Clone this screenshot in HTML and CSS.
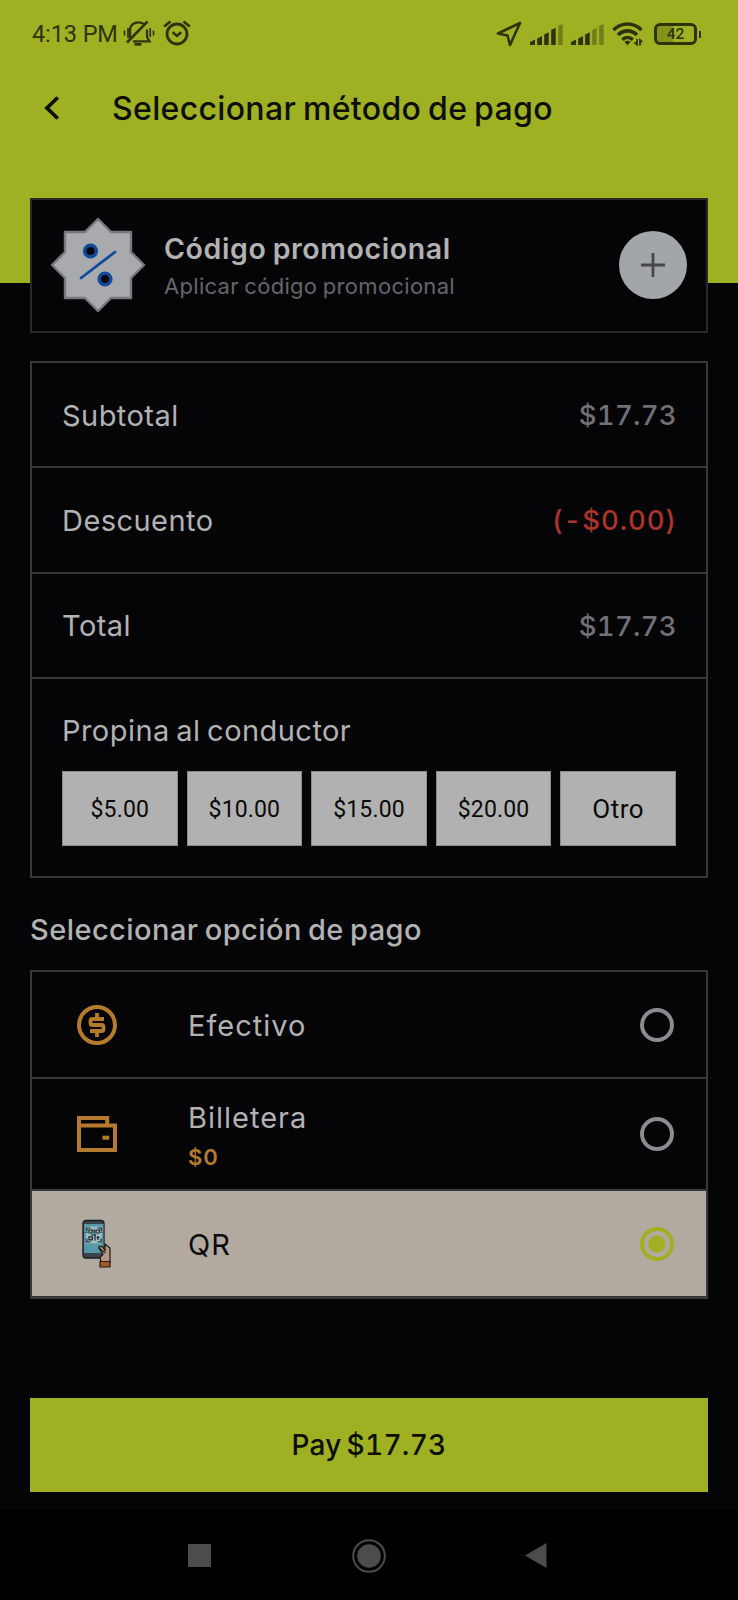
FILE: index.html
```html
<!DOCTYPE html>
<html lang="es">
<head>
<meta charset="utf-8">
<title>Seleccionar método de pago</title>
<link rel="stylesheet" href="styles.css">
</head>
<body>
<div class="screen">
  <header class="header">
    <div class="status">
      <span class="clock">4:13 PM</span>
      <svg class="bell" width="32" height="28" viewBox="0 0 32 28" fill="none" stroke="#2d330c" stroke-width="2.300">
        <path d="M7 18.500v-8C7 5 11 2.300 15.500 2.300c2.700 0 4.700.8 6.200 2.200M24 9.500v7.500l2.500 4.300H10"/>
        <path d="M4 22.500 24.500 1.500" stroke-width="2.600"/>
        <path d="M11.500 24.300h7" stroke-width="2.600"/>
        <path d="M1.500 10.500v5M5 8v10M27.200 8v9M30.500 10.500v5" stroke-width="1.700"/>
      </svg>
      <svg class="alarm" width="28" height="26" viewBox="0 0 28 26" fill="none" stroke="#2d330c" stroke-width="2.800">
        <circle cx="14" cy="14" r="10"/><path d="M9.500 12.300 14 15.800l4.300-3.500" stroke-width="2.500"/>
        <path d="M1.200 6.500 7.500 1.500M20.500 1.500l6.300 5" stroke-width="2.800"/>
      </svg>
      <div class="status-right">
        <svg class="loc" width="26" height="26" viewBox="0 0 26 26" fill="none" stroke="#2d330c" stroke-width="2.600" stroke-linejoin="round"><path d="M24 2 2 12.500l9.500 2L14 24z"/></svg>
        <svg class="sig" width="33" height="21" viewBox="0 0 33 21" fill="#2d330c"><path d="M0 18l5-2.500V21H0zM7.200 14.500 12 12v9H7.200zM14.200 10.500l4.500-2.300V21h-4.500zM21.200 6l4.500-2.300V21h-4.500z"/><path d="M28.200 1.800 32.700 0v21h-4.500z" opacity=".4"/></svg>
        <svg class="sig" width="33" height="21" viewBox="0 0 33 21" fill="#2d330c"><path d="M0 18l5-2.500V21H0zM7.200 14.500 12 12v9H7.200zM14.200 10.500l4.500-2.300V21h-4.500z"/><path d="M21.200 6l4.500-2.300V21h-4.500zM28.200 1.800 32.700 0v21h-4.500z" opacity=".4"/></svg>
        <svg class="wifi" width="32" height="24" viewBox="0 0 32 24" fill="none" stroke="#2d330c" stroke-width="3.600">
          <path d="M1.500 8c8-8 20-8 28 0M6 13c5.500-5.500 13.500-5.500 19 0M10.300 17.800c3-3 7.400-3 10.400 0"/><path d="M12.500 20c1.500-1.600 4.500-1.600 6 0l-3 3.200z" fill="#2d330c" stroke="none"/>
          <path d="M25 17v5.500l-2.500-2M28 23.500V18l2.300 2" stroke-width="1.800"/>
        </svg>
        <div class="battery">42</div><span class="battery-tip"></span>
      </div>
    </div>
    <div class="titlebar">
      <svg class="back" width="16" height="24" viewBox="0 0 16 24" fill="none" stroke="#0d0f04" stroke-width="3.800"><path d="M13.700 1.500 3 12l10.700 10.500"/></svg>
      <h1>Seleccionar método de pago</h1>
    </div>
  </header>

  <section class="promo">
    <svg class="badge" width="96" height="96" viewBox="0 0 96 96">
      <path d="M48 2 61 15H81V35L94 48 81 61V81H61L48 94 35 81H15V61L2 48 15 35V15H35Z" fill="#a9aaad" stroke="#77797e" stroke-width="2.400" stroke-linejoin="round"/>
      <path d="M31 61 65 35" stroke="#104a9c" stroke-width="2.800" stroke-linecap="round"/>
      <circle cx="40.500" cy="34" r="5.800" fill="#050508" stroke="#104a9c" stroke-width="3.600"/>
      <circle cx="55" cy="62" r="5.800" fill="#050508" stroke="#104a9c" stroke-width="3.600"/>
    </svg>
    <div class="promo-text"><div class="promo-title">Código promocional</div><div class="promo-sub">Aplicar código promocional</div></div>
    <button class="add" aria-label="+"><svg width="24" height="24" viewBox="0 0 24 24" stroke="#47474b" stroke-width="2.800"><path d="M12 0v24M0 12h24"/></svg></button>
  </section>

  <section class="summary">
    <div class="row"><span>Subtotal</span><span class="amount">$17.73</span></div>
    <div class="row"><span>Descuento</span><span class="amount discount">(-$0.00)</span></div>
    <div class="row"><span>Total</span><span class="amount">$17.73</span></div>
    <div class="tips">
      <div class="tips-label">Propina al conductor</div>
      <div class="tip-list">
        <button class="tip">$5.00</button><button class="tip">$10.00</button><button class="tip">$15.00</button><button class="tip">$20.00</button><button class="tip other">Otro</button>
      </div>
    </div>
  </section>

  <h2>Seleccionar opción de pago</h2>
  <section class="options">
    <div class="option cash">
      <svg class="icon" width="40" height="40" viewBox="0 0 40 40" fill="none" stroke="#b47b2c" stroke-width="4"><circle cx="20" cy="20" r="18"/><path d="M27 14H15.500a2 2 0 0 0-2 2v2a2 2 0 0 0 2 2h9a2 2 0 0 1 2 2v2a2 2 0 0 1-2 2H13M20 8v5M20 26.500V32" stroke-width="3.800"/></svg>
      <div class="name">Efectivo</div><span class="radio"></span>
    </div>
    <div class="option wallet">
      <svg class="icon" width="40" height="36" viewBox="0 0 40 36" fill="none" stroke="#b47b2c" stroke-width="4"><path d="M30.200 9V2H2v32h36V9.500H2"/><path d="M25.500 21.700h6.700" stroke-width="4"/></svg>
      <div class="name"><div>Billetera</div><div class="balance">$0</div></div><span class="radio"></span>
    </div>
    <div class="option qr">
      <svg class="icon" width="40" height="50" viewBox="0 0 40 50">
        <rect x="6" y="1.500" width="21" height="37.500" rx="3" fill="#3b464c" stroke="#181c20" stroke-width="1.300"/>
        <path d="M7 5h19.500v29H7z" fill="#5698a9"/><path d="M9 7.500h16v17H9z" fill="#a0bdc2"/>
        <path d="M13.500 9h-3.700v3.500M20.500 9h3.700v3.500M9.800 19.500V23h3.700M24.200 19.500V23h-3.700" fill="none" stroke="#1a252b" stroke-width="1.200"/>
        <path d="M12 11h3.300v3H12zM19 11h3.300v3H19zM12 17.800h3.300v3H12zM17.200 10.500v4M14 16h5M18 15v6.500M21 17v4M19.500 18.500h3" fill="none" stroke="#1a252b" stroke-width="1.200"/>
        <path d="M7 13.500h19" stroke="#376d7e" stroke-width="1"/>
        <path d="M22 29c0-2 2-2 4-.5l2 3v-6.500l5 4V43H24l-1-4.500 3-3z" fill="#b39883" stroke="#1e1b1a" stroke-width="1.200"/>
        <path d="M21.500 28.500 28 34" stroke="#222" stroke-width="1.300"/><path d="M23 42.500h10V48H23z" fill="#a65a22" stroke="#261b15" stroke-width="1.200"/>
      </svg>
      <div class="name">QR</div><span class="radio on"></span>
    </div>
  </section>
  <button class="pay">Pay $17.73</button>
  <nav class="nav">
    <span class="square"></span>
    <svg class="home" width="36" height="36" viewBox="0 0 36 36"><circle cx="18" cy="18" r="15.800" fill="none" stroke="#4c4c4c" stroke-width="2"/><circle cx="18" cy="18" r="11.800" fill="#4c4c4c"/></svg>
    <svg class="prev" width="22" height="25" viewBox="0 0 22 25"><path d="M0 12.500 21.500 0v25z" fill="#4c4c4c"/></svg>
  </nav>
</div>
</body>
</html>
```
FILE: styles.css
```css
* { box-sizing: border-box; }
body { margin: 0; background: #050508; }
button { border: 0; padding: 0; margin: 0; border-radius: 0; font: inherit; }
svg { display: block; flex: none; }
h1, h2 { margin: 0; font-weight: 500; }
.screen { width: 738px; height: 1600px; overflow: hidden; display: flex; flex-direction: column; background: #050508; color: #b2b2b2; font-family: Inter, "Liberation Sans", sans-serif; white-space: nowrap; }
.header { flex: none; height: 283px; background: #9fb122; }
.status { height: 68px; padding: 0 37px 0 32px; display: flex; align-items: center; color: #2d330c; }
.clock { font: 400 23.5px/28px Roboto, sans-serif; width: 91px; letter-spacing: -.1px; }
.alarm { margin: -2px 0 0 8px; }
.status-right { margin-left: auto; display: flex; align-items: center; }
.loc { margin-right: 8px; }
.sig { margin-right: 8px; }
.wifi { margin-right: 10px; }
.battery { width: 43px; height: 22px; border: 3px solid #2d330c; border-radius: 6px; font: 500 15.5px/17px Roboto, sans-serif; text-align: center; background: linear-gradient(90deg, #84931a 42%, transparent 42%); }
.battery-tip { width: 2.5px; height: 7px; background: #2d330c; margin-left: 1.5px; }
.titlebar { height: 80px; padding-left: 44px; display: flex; align-items: center; color: #0d0f04; }
h1 { margin-left: 52px; font-size: 32px; letter-spacing: .33px; word-spacing: -2px; }

.promo { flex: none; height: 135px; margin: -85px 30px 0; padding: 0 19px 1px 18px; border: 2px solid #29292c; background: #050508; display: flex; align-items: center; }
.promo-text { margin: 2px 0 0 18px; }
.promo-title { font-size: 28.5px; line-height: 36px; font-weight: 600; letter-spacing: .6px; word-spacing: -1.5px; }
.promo-sub { margin-top: 4px; font-size: 22px; line-height: 30px; color: #66656b; letter-spacing: .3px; word-spacing: -1px; }
.add { margin-left: auto; width: 68px; height: 68px; border-radius: 50%; background: #a3a6a9; display: flex; align-items: center; justify-content: center; }

.summary { flex: none; height: 517px; margin: 28px 30px 0; border: 2px solid #38373a; font-size: 29px; letter-spacing: .45px; }
.row { height: 105.33px; padding: 1px 29px 0 30px; border-bottom: 2px solid #38373a; display: flex; align-items: center; justify-content: space-between; }
.amount { color: #727077; font-size: 27.5px; font-weight: 500; letter-spacing: .3px; font-variant-numeric: tabular-nums; }
.discount { color: #ad332b; letter-spacing: .9px; }
.tips { padding: 33px 30px 0; }
.tips-label { line-height: 38px; word-spacing: -2px; }
.tip-list { margin-top: 21px; display: grid; grid-template-columns: repeat(5, 1fr); gap: 9px; }
.tip { height: 75px; padding-top: 2px; background: #b1b1b1; border: 1px solid #8c8c8c; color: #0a0a0a; font: 400 23px/1 Roboto, sans-serif; letter-spacing: .15px; }
.tip.other { font-size: 26px; letter-spacing: .5px; }

h2 { flex: none; margin: 33px 0 0 30px; font-size: 29px; line-height: 38px; letter-spacing: .45px; word-spacing: -2px; }
.options { flex: none; margin: 21px 30px 0; border: 2px solid #38373a; border-bottom-width: 3px; font-size: 29px; }
.option { display: grid; grid-template-columns: 40px 1fr 34px; column-gap: 71px; align-items: center; padding: 0 32px 0 45px; border-bottom: 2px solid #38373a; }
.cash { height: 107px; }
.wallet { height: 112px; }
.qr { height: 105px; background: #b2a9a0; border: 0; color: #0c0c0c; }
.name { letter-spacing: 1px; line-height: 38px; padding-top: 3px; }
.wallet .name { padding-top: 7px; }
.balance { color: #b47b2c; font-size: 22px; line-height: 40px; font-weight: 600; }
.radio { width: 34px; height: 34px; border: 4px solid #8c8b90; border-radius: 50%; }
.radio.on { border-color: #9fb122; background: radial-gradient(circle, #9fb122 8px, transparent 9px); }

.pay { flex: none; margin: 99px 30px 18px; height: 94px; background: #9fb122; color: #0d0f04; font-size: 28px; font-weight: 500; letter-spacing: .3px; word-spacing: -3px; font-variant-numeric: tabular-nums; }
.nav { flex: 1; background: #000; display: flex; align-items: center; padding: 1px 0 0 188px; }
.square { width: 23px; height: 23px; background: #4c4c4c; }
.home { margin-left: 140px; }
.prev { margin-left: 138px; }
```
